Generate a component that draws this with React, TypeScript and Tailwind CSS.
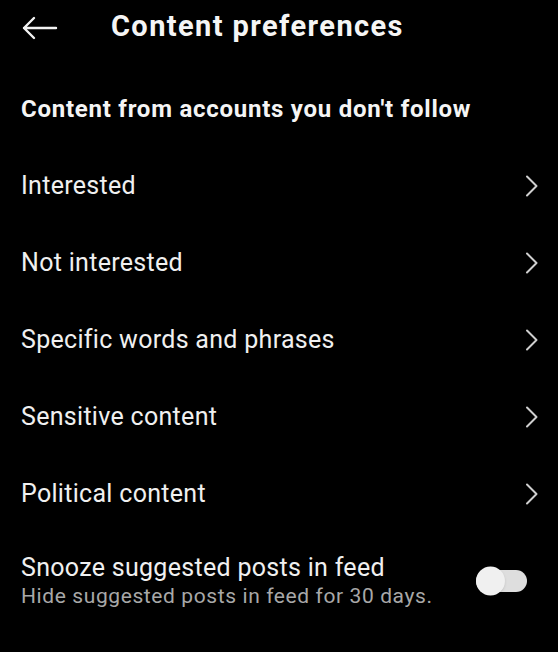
import { useState } from 'react';

const rows = [
  'Interested',
  'Not interested',
  'Specific words and phrases',
  'Sensitive content',
  'Political content',
];

function Chevron() {
  return (
    <svg width="14" height="22" viewBox="0 0 14 22" fill="none" className="shrink-0">
      <path d="M2 1.5 L11.5 11 L2 20.5" stroke="#cfcfcf" strokeWidth="2" strokeLinecap="round" strokeLinejoin="round" />
    </svg>
  );
}

export default function App() {
  const [snooze, setSnooze] = useState(false);

  return (
    <div className="w-[558px] h-[652px] bg-black text-white overflow-hidden font-['Roboto',sans-serif]">
      <div className="flex items-center h-[52px] pl-[22px]">
        <svg width="36" height="24" viewBox="0 0 36 24" fill="none" className="shrink-0 mt-[3px]">
          <path d="M34 12 H2 M12 2 L2 12 L12 22" stroke="#f2f2f2" strokeWidth="2.4" strokeLinecap="round" strokeLinejoin="round" />
        </svg>
        <h1 className="ml-[53px] text-[29px] tracking-[1.4px] font-bold leading-none text-[#f5f5f5]">Content preferences</h1>
      </div>

      <h2 className="mt-[45px] px-[21px] text-[24px] tracking-[0.75px] font-bold leading-none text-[#f5f5f5]">
        Content from accounts you don't follow
      </h2>

      <div className="mt-[26px] flex flex-col">
        {rows.map((r) => (
          <div key={r} className="flex items-center justify-between h-[77px] pl-[21px] pr-[19px]">
            <span className="text-[25px] tracking-[0.3px] leading-none text-[#f0f0f0]">{r}</span>
            <Chevron />
          </div>
        ))}
      </div>

      <div className="flex items-center justify-between pl-[21px] pr-[31px] pt-[21px]">
        <div className="flex flex-col">
          <span className="text-[25px] tracking-[0.3px] leading-[30px] text-[#f0f0f0]">Snooze suggested posts in feed</span>
          <span className="text-[21px] tracking-[0.6px] leading-[26px] text-[#a8a8a8]">Hide suggested posts in feed for 30 days.</span>
        </div>
        <button
          onClick={() => setSnooze(!snooze)}
          className={`relative w-[51px] h-[22px] rounded-full ${snooze ? 'bg-[#3797f0]' : 'bg-[#dedede]'}`}
        >
          <span
            className={`absolute top-1/2 -translate-y-1/2 w-[29px] h-[29px] rounded-full bg-[#f0f0f0] shadow ${snooze ? 'right-0' : 'left-0'}`}
          />
        </button>
      </div>
    </div>
  );
}
